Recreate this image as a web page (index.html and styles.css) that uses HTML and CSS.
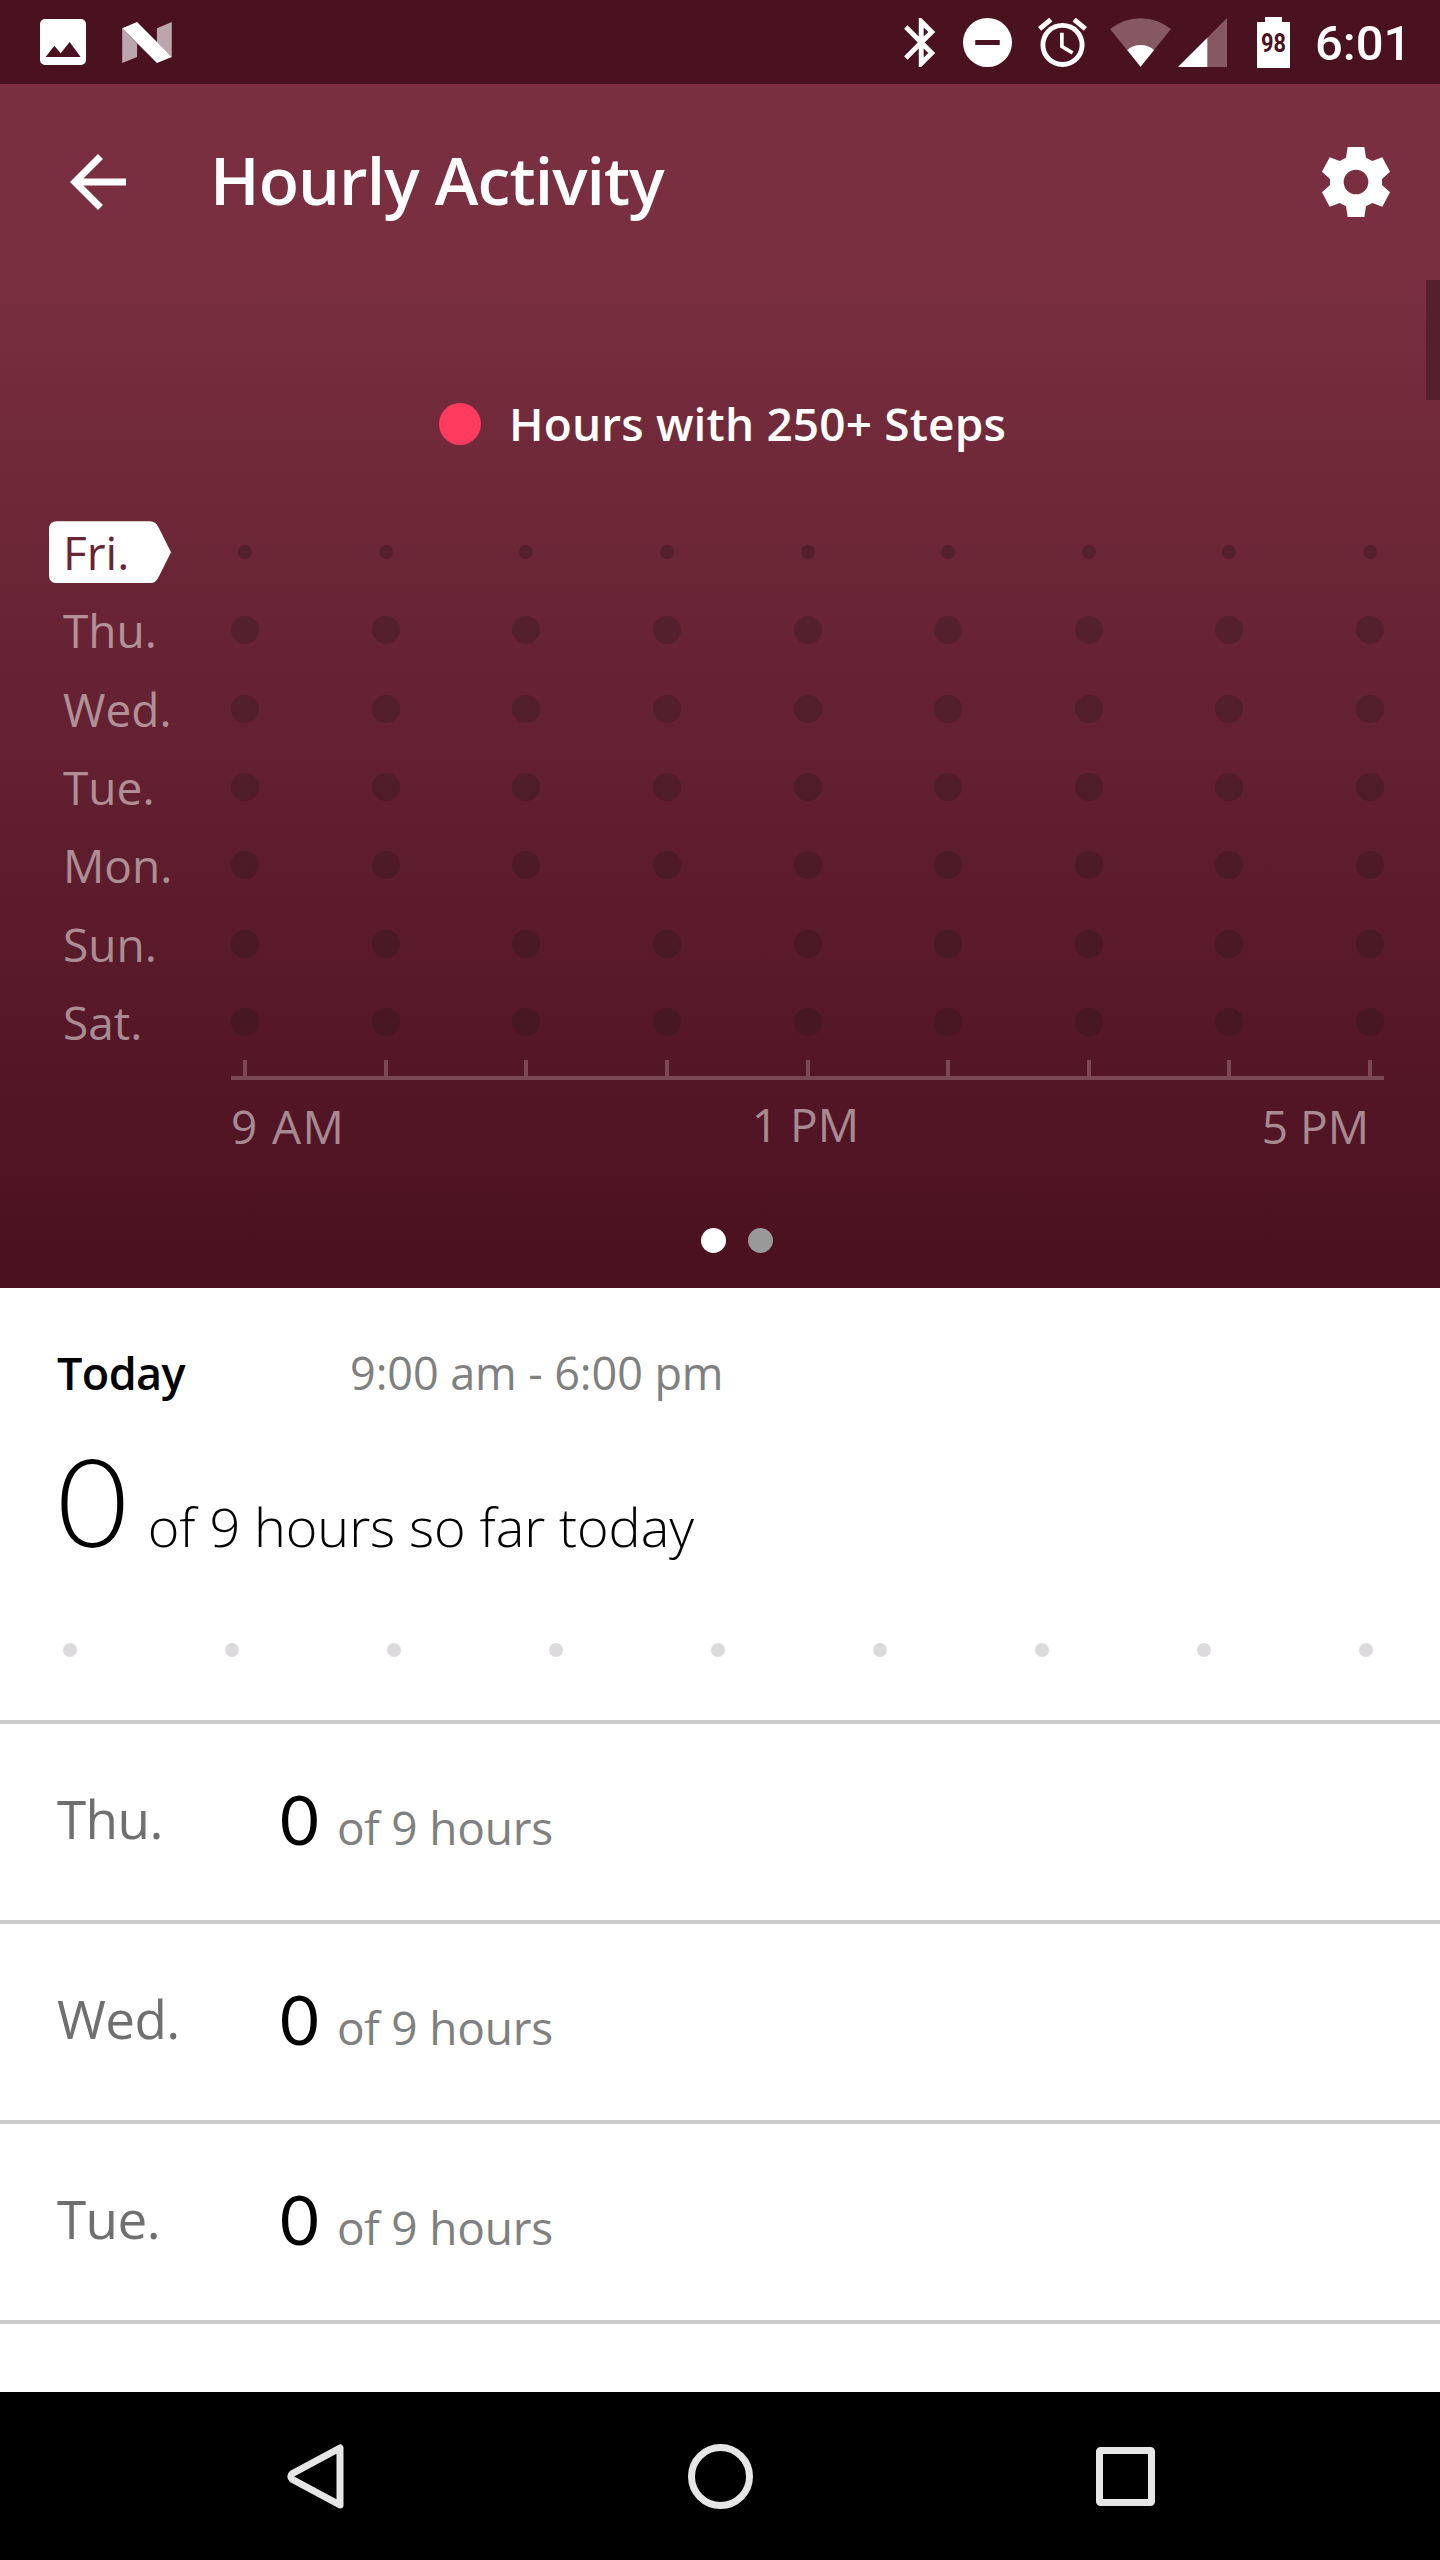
FILE: index.html
```html
<!DOCTYPE html>
<html lang="en">
<head>
  <meta charset="UTF-8">
  <meta name="viewport" content="width=device-width, initial-scale=1.0">
  <title>Hourly Activity</title>
  <link rel="stylesheet" href="styles.css">
</head>
<body>
  <!-- Status bar -->
  <div class="status-bar">
    <svg class="icon-picture" viewBox="0 0 138 138" width="46" height="46">
      <path fill="#fff" fill-rule="evenodd" d="M15 0h108a15 15 0 0 1 15 15v108a15 15 0 0 1-15 15H15a15 15 0 0 1-15-15V15A15 15 0 0 1 15 0zM17 114h105L89 69 62 103 43 80z"/>
    </svg>
    <svg class="icon-nougat" viewBox="0 0 150 124" width="50" height="41">
      <path fill="#bca6ad" d="M0 19l45 47v40L0 124zM105 19l45-19v106l-45-45z"/>
      <path fill="#fff" d="M0 19L45 0l105 106-45 18z"/>
    </svg>
    <div class="status-right">
      <svg class="icon-bluetooth" viewBox="5 2 13 20" width="32" height="49">
        <path fill="#fff" d="M17.71 7.71L12 2h-1v7.59L6.41 5 5 6.41 10.59 12 5 17.59 6.41 19 11 14.41V22h1l5.71-5.71-4.3-4.29 4.3-4.29zM13 5.83l1.88 1.88L13 9.59V5.83zm1.88 10.46L13 18.17v-3.76l1.88 1.88z"/>
      </svg>
      <svg class="icon-dnd" viewBox="2 2 20 20" width="49" height="49">
        <path fill="#fff" d="M12 2a10 10 0 1 0 0 20 10 10 0 0 0 0-20zm5 11H7v-2h10v2z"/>
      </svg>
      <svg class="icon-alarm" viewBox="2 2 20 20" width="49" height="49">
        <path fill="#fff" d="M22 5.72l-4.6-3.86-1.29 1.53 4.6 3.86L22 5.72zM7.88 3.39L6.6 1.86 2 5.71l1.29 1.53 4.59-3.85zM12.5 8H11v6l4.75 2.85.75-1.23-4-2.37V8zM12 4a9 9 0 1 0 0 18 9 9 0 0 0 0-18zm0 16a7 7 0 1 1 0-14 7 7 0 0 1 0 14z"/>
      </svg>
      <svg class="icon-wifi" viewBox="0 0 184 147" width="61" height="49">
        <path fill="#855863" d="M0 33Q40 0 92 0t92 33L92 147z"/>
        <path fill="#fff" d="M52 96q17-15 40-15t41 15l-41 51z"/>
      </svg>
      <svg class="icon-signal" viewBox="0 0 147 147" width="49" height="49">
        <path fill="#855863" d="M0 147L147 0v147z"/>
        <path fill="#fff" d="M0 147l88-88v88z"/>
      </svg>
      <svg class="icon-battery" viewBox="0 0 33 51" width="33" height="51">
        <path fill="#fff" d="M8 0h17v5h8v46H0V5h8z"/>
        <text class="battery-level" x="16.5" y="35" text-anchor="middle" textLength="25" lengthAdjust="spacingAndGlyphs">98</text>
      </svg>
      <span class="clock">6:01</span>
    </div>
  </div>

  <!-- Chart panel -->
  <div class="panel">
    <div class="app-bar">
      <svg viewBox="0 0 24 24" width="84" height="84">
        <path fill="#fff" d="M20 11H7.83l5.59-5.59L12 4l-8 8 8 8 1.41-1.41L7.83 13H20v-2z"/>
      </svg>
      <h1 class="title">Hourly Activity</h1>
      <svg class="icon-gear" viewBox="-105 -105 210 210" width="70" height="70">
        <path fill="#fff" fill-rule="evenodd" d="M-25-105h50l5 32 19 10 30-11 23 43-24 22v18l24 22-23 43-30-11-19 10-5 32h-50l-5-32-19-10-30 11-23-43 24-22v-18l-24-22 23-43 30 11 19-10zM0-37a37 37 0 1 0 0 74 37 37 0 0 0 0-74z"/>
      </svg>
    </div>
    <div class="scrollbar"></div>

    <div class="legend">
      <span class="legend-dot"></span>
      <span class="legend-text">Hours with 250+ Steps</span>
    </div>

    <div class="chart">
      <div class="chart-row today"><span class="day">Fri.</span><div class="dots"></div></div>
      <div class="chart-row"><span class="day">Thu.</span><div class="dots"></div></div>
      <div class="chart-row"><span class="day">Wed.</span><div class="dots"></div></div>
      <div class="chart-row"><span class="day">Tue.</span><div class="dots"></div></div>
      <div class="chart-row"><span class="day">Mon.</span><div class="dots"></div></div>
      <div class="chart-row"><span class="day">Sun.</span><div class="dots"></div></div>
      <div class="chart-row"><span class="day">Sat.</span><div class="dots"></div></div>
    </div>
    <div class="axis">
      <i></i><i></i><i></i><i></i><i></i><i></i><i></i><i></i><i></i>
    </div>
    <div class="axis-labels">
      <span class="morning">9 AM</span>
      <span class="noon">1 PM</span>
      <span>5 PM</span>
    </div>

    <div class="pager">
      <span class="page active"></span>
      <span class="page"></span>
    </div>
  </div>

  <!-- Today summary -->
  <div class="summary">
    <div class="summary-head">
      <span class="summary-day">Today</span>
      <span class="summary-time">9:00 am - 6:00 pm</span>
    </div>
    <div class="summary-count">
      <span class="big">0</span>
      <span class="big-label">of 9 hours so far today</span>
    </div>
    <div class="dots"></div>
  </div>

  <!-- Previous days -->
  <div class="list">
    <div class="list-row">
      <span class="list-day">Thu.</span>
      <span class="count">0</span>
      <span class="count-label">of 9 hours</span>
    </div>
    <div class="list-row">
      <span class="list-day">Wed.</span>
      <span class="count">0</span>
      <span class="count-label">of 9 hours</span>
    </div>
    <div class="list-row">
      <span class="list-day">Tue.</span>
      <span class="count">0</span>
      <span class="count-label">of 9 hours</span>
    </div>
  </div>

  <!-- Navigation bar -->
  <div class="nav-bar">
    <svg viewBox="0 0 80 80" width="80" height="80">
      <path fill="none" stroke="#e6e6e6" stroke-width="7" stroke-linejoin="round" d="M65 12v57L17.500 43.500q-3.500-3 0-6z"/>
    </svg>
    <svg viewBox="0 0 80 80" width="80" height="80">
      <circle cx="40.500" cy="40.500" r="29" fill="none" stroke="#e6e6e6" stroke-width="7"/>
    </svg>
    <svg viewBox="0 0 80 80" width="80" height="80">
      <rect x="14.500" y="14.500" width="52" height="52" rx="1" fill="none" stroke="#e6e6e6" stroke-width="7"/>
    </svg>
  </div>

  <script>
    // One dot per hour, 9 AM to 5 PM
    document.querySelectorAll('.dots').forEach(row => {
      for (let hour = 9; hour <= 17; hour++) {
        row.appendChild(document.createElement('i'));
      }
    });
  </script>
</body>
</html>
```

FILE: styles.css
```css
* {
  box-sizing: border-box;
}
body {
  margin: 0;
  width: 1440px;
  height: 2560px;
  display: flex;
  flex-direction: column;
  background: #fff;
  font-family: "Open Sans", sans-serif;
  overflow: hidden;
}
svg {
  display: block;
  flex: none;
}

/* Status bar */
.status-bar {
  height: 84px;
  padding-left: 40px;
  display: flex;
  align-items: center;
  background: #4a1121;
}
.icon-nougat {
  margin-left: 36px;
}
.status-right {
  display: flex;
  align-items: center;
  margin-left: 732px;
}
.icon-dnd {
  margin-left: 27px;
}
.icon-alarm {
  margin-left: 26px;
}
.icon-wifi {
  margin-left: 23px;
}
.icon-signal {
  margin-left: 7px;
}
.icon-battery {
  margin-left: 30px;
}
.battery-level {
  font-family: Roboto, sans-serif;
  font-size: 25px;
  font-weight: 700;
  fill: #4a1121;
}
.clock {
  margin: 4px 0 0 25px;
  font-family: Roboto, sans-serif;
  font-size: 49px;
  font-weight: 500;
  line-height: 56px;
  color: #fff;
}

/* Chart panel */
.panel {
  position: relative;
  height: 1204px;
  display: flex;
  flex-direction: column;
  color: #fff;
  background: linear-gradient(#792f3f 0, #792f3f 180px, #4a1020 1204px);
}
.app-bar {
  height: 196px;
  padding: 0 49px 0 56px;
  display: flex;
  align-items: center;
}
.title {
  margin: 0 0 7px 70px;
  font-size: 66px;
  font-weight: 600;
  line-height: 80px;
  letter-spacing: -0.9px;
}
.icon-gear {
  margin-left: auto;
}
.scrollbar {
  position: absolute;
  top: 196px;
  right: 0;
  width: 14px;
  height: 120px;
  background: #54202c;
}
.legend {
  height: 84px;
  margin-top: 102px;
  padding-left: 439px;
  display: flex;
  align-items: center;
  gap: 28px;
  font-size: 46px;
  font-weight: 600;
  line-height: 56px;
  letter-spacing: 0.15px;
}
.legend-text {
  margin-bottom: 3px;
}
.legend-dot {
  width: 42px;
  height: 42px;
  border-radius: 50%;
  background: #ff3b60;
}
.chart {
  margin-top: 47px;
}
.chart-row {
  height: 78.33px;
  padding: 0 56px 0 49px;
  display: flex;
  align-items: center;
}
.day {
  width: 122px;
  height: 62px;
  margin-right: 60px;
  padding-left: 14px;
  font-size: 46px;
  line-height: 62px;
  color: rgba(255, 255, 255, 0.5);
}
.today .day {
  color: #6a2433;
  background: #fff;
  clip-path: path("M8 0H101Q107 0 110 7L122 31L110 55Q107 62 101 62H8Q0 62 0 54V8Q0 0 8 0Z");
}
.dots {
  flex: 1;
  display: flex;
  justify-content: space-between;
  align-items: center;
}
.dots i {
  width: 28px;
  height: 28px;
  border-radius: 50%;
  background: rgba(20, 20, 20, 0.23);
}
.today .dots {
  padding: 0 7px;
}
.today .dots i {
  width: 14px;
  height: 14px;
  background: rgba(20, 20, 20, 0.27);
}
.axis {
  height: 20px;
  margin: -1px 56px 0 231px;
  padding: 0 12px;
  display: flex;
  justify-content: space-between;
  border-bottom: 4px solid #7c4855;
}
.axis i {
  width: 4px;
  background: #7c4855;
}
.axis-labels {
  margin: 18px 71px 0 230px;
  display: flex;
  justify-content: space-between;
  font-size: 46px;
  line-height: 56px;
  color: rgba(255, 255, 255, 0.5);
}
.morning {
  padding-left: 1px;
  letter-spacing: 1.4px;
}
.noon {
  margin: -2px 0 0 4px;
}
.pager {
  margin-top: auto;
  padding: 0 0 35px 701px;
  display: flex;
  gap: 22px;
}
.page {
  width: 25px;
  height: 25px;
  border-radius: 50%;
  background: #999;
}
.page.active {
  background: #fff;
}

/* Today summary */
.summary {
  height: 436px;
  padding: 57px 67px 0 57px;
  border-bottom: 4px solid #cacaca;
}
.summary-head {
  display: flex;
  font-size: 45px;
  line-height: 56px;
}
.summary-day {
  width: 293px;
  font-weight: 600;
  letter-spacing: -0.6px;
  color: #000;
}
.summary-time {
  letter-spacing: -0.1px;
  color: #808080;
}
.summary-count {
  display: flex;
  align-items: baseline;
  gap: 20px;
  margin-top: 38px;
  line-height: 1;
  font-weight: 300;
  color: #000;
}
.big {
  font-family: Lato, sans-serif;
  font-size: 122px;
}
.big-label {
  font-size: 54px;
  letter-spacing: -0.1px;
}
.summary .dots {
  margin: 82px 0 0 6px;
}
.summary .dots i {
  width: 14px;
  height: 14px;
  background: #dcdadc;
}

/* Previous days */
.list {
  flex: 1;
}
.list-row {
  height: 200px;
  padding: 62px 0 0 57px;
  display: flex;
  align-items: baseline;
  line-height: 1;
  border-bottom: 4px solid #cacaca;
}
.list-day {
  width: 223px;
  font-size: 53px;
  letter-spacing: -0.6px;
  color: #6f6f6f;
  align-self: flex-start;
  padding-top: 6px;
}
.count {
  font-family: Lato, sans-serif;
  font-size: 67px;
  color: #000;
}
.count-label {
  margin-left: 18px;
  font-size: 46px;
  letter-spacing: -0.2px;
  color: #808080;
}

/* Navigation bar */
.nav-bar {
  height: 168px;
  display: flex;
  justify-content: center;
  align-items: center;
  gap: 325px;
  background: #000;
}
```
